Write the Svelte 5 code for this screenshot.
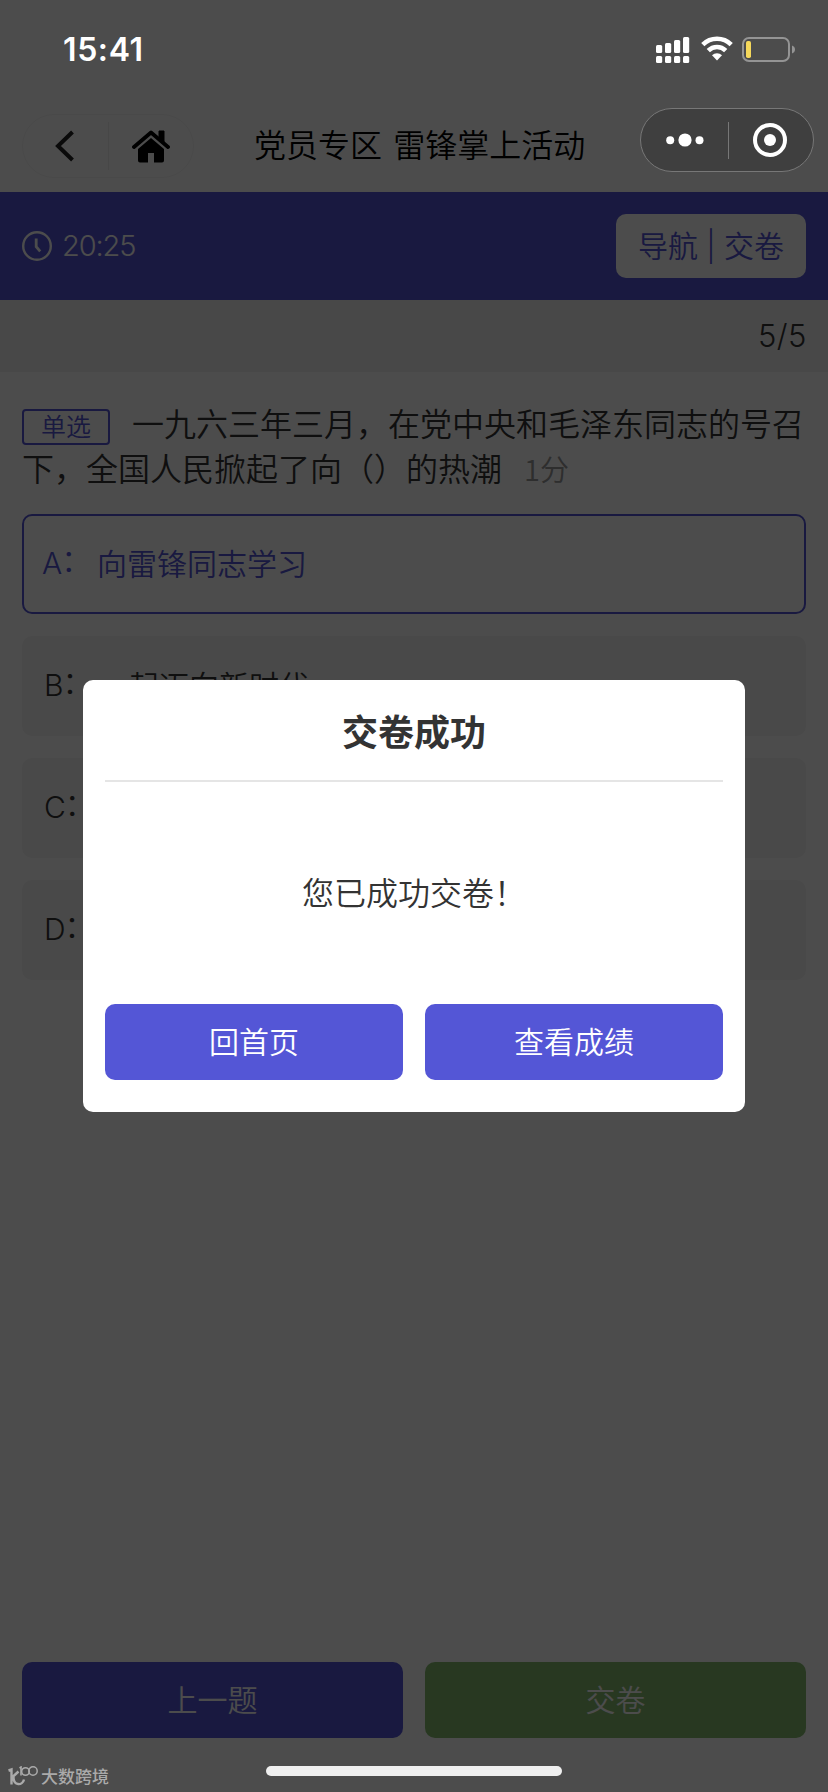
<script>
  let timeLeft = '20:25';
  let current = 5;
  let total = 5;
  let selected = 'A';
  let showModal = true;

  const options = [
    { key: 'A', text: '向雷锋同志学习' },
    { key: 'B', text: '一起迈向新时代' },
    { key: 'C', text: '' },
    { key: 'D', text: '' }
  ];

  // signal bar heights, left to right
  const bars = [8, 10, 13, 16];
</script>

<div class="screen">
  <div class="page">
    <header class="nav">
      <div class="nav-pill">
        <button class="nav-btn" aria-label="返回">
          <svg width="20" height="34" viewBox="0 0 20 34">
            <path d="M17.5 3 3 17l14.5 14" fill="none" stroke="#222" stroke-width="4" />
          </svg>
        </button>
        <span class="nav-line"></span>
        <button class="nav-btn" aria-label="首页">
          <svg width="38" height="33" viewBox="0 0 38 33">
            <path d="M2 17 19 2.5l17 14.5" fill="none" stroke="#000" stroke-width="3.8" stroke-linecap="round" stroke-linejoin="round" />
            <path d="M27 1h5v11l-5-4z" fill="#000" stroke="#000" stroke-linejoin="round" />
            <path d="M6 19 19 8l13 11V30.5q0 2-2 2h-8v-9.5h-6v9.5H8q-2 0-2-2z" fill="#000" />
          </svg>
        </button>
      </div>
      <h1>党员专区 雷锋掌上活动</h1>
    </header>

    <div class="timer-bar">
      <div class="timer">
        <svg width="30" height="30" viewBox="0 0 30 30" fill="none" stroke="#fff" stroke-width="2.4">
          <circle cx="15" cy="15" r="13.8" />
          <path d="M14.2 7.5v8.2l4 4.6" stroke-width="2.8" />
        </svg>
        <span>{timeLeft}</span>
      </div>
      <button class="jump">导航<i>|</i>交卷</button>
    </div>

    <div class="progress">{current}/{total}</div>

    <main>
      <p class="question"><span class="tag">单选</span>一九六三年三月，在党中央和毛泽东同志的号召下，全国人民掀起了向（）的热潮<span class="score">1分</span></p>
      <ul>
        {#each options as { key, text }}
          <li class:active={key === selected}>
            <span class="key">{key}<i>：</i></span>
            <span>{text}</span>
          </li>
        {/each}
      </ul>
    </main>

    <footer>
      <button class="btn">上一题</button>
      <button class="btn green">交卷</button>
    </footer>
  </div>

  <!-- The Modal -->
  {#if showModal}
    <div class="mask">
      <div class="modal">
        <h2>交卷成功</h2>
        <p>您已成功交卷！</p>
        <div class="actions">
          <button class="btn">回首页</button>
          <button class="btn">查看成绩</button>
        </div>
      </div>
    </div>
  {/if}

  <!-- System chrome stays above the mask -->
  <div class="system">
    <div class="status">
      <span class="clock">15:41</span>
      <div class="status-icons">
        <svg width="34" height="27" viewBox="0 0 34 27" fill="#fff">
          {#each bars as h, i}
            <rect x={i * 9} y={17 - h} width="6.2" height={h} rx="1.5" />
            <rect x={i * 9} y="20" width="6.2" height="7" rx="1.5" />
          {/each}
        </svg>
        <svg class="wifi" width="32" height="25" viewBox="0 0 32 25" fill="none" stroke="#fff" stroke-width="4.6">
          <path d="M1.8 8.6a20.3 20.3 0 0 1 28.4 0" />
          <path d="M7.3 14.6a12.4 12.4 0 0 1 17.4 0" />
          <path d="M16 24.5l-5-5.2a7.2 7.2 0 0 1 10 0z" fill="#fff" stroke="none" />
        </svg>
        <svg class="battery" width="54" height="25" viewBox="0 0 54 25">
          <rect x="1" y="1" width="46" height="23" rx="6" fill="none" stroke="#949494" stroke-width="2" />
          <rect x="4" y="4" width="5" height="17" rx="1.8" fill="#f5d85b" />
          <path d="M50 8.5c4 1.2 4 6.8 0 8z" fill="#949494" />
        </svg>
      </div>
    </div>
    <div class="capsule">
      <svg width="38" height="14" viewBox="0 0 38 14" fill="#fff">
        <circle cx="4.2" cy="7.3" r="4" />
        <circle cx="19" cy="7" r="6.6" />
        <circle cx="33.5" cy="7.3" r="4" />
      </svg>
      <span class="capsule-line"></span>
      <svg width="34" height="34" viewBox="0 0 34 34">
        <circle cx="17" cy="17" r="15" fill="none" stroke="#fff" stroke-width="4" />
        <circle cx="17" cy="17" r="6" fill="#fff" />
      </svg>
    </div>
    <div class="bottom">
      <div class="watermark">
        <svg width="31" height="21" viewBox="0 0 31 21" fill="none" stroke="#aaa">
          <path d="M.5 4.5 3.5 3.5v15M10.5 5.5 4 11.5M5.5 11c0 9 9 9 10.5 2.5" stroke-width="2.4" />
          <path d="M11.5 2 13 1v8.5" stroke-width="1.6" />
          <circle cx="17.5" cy="5.5" r="3.8" stroke-width="1.5" />
          <circle cx="25" cy="5" r="4.2" stroke-width="1.5" />
        </svg>
        <span>大数跨境</span>
      </div>
      <div class="home-bar"></div>
    </div>
  </div>
</div>

<style>
  :global(body) {
    margin: 0;
  }

  .screen {
    position: relative;
    width: 828px;
    height: 1792px;
    overflow: hidden;
    background: #fff;
    color: #333;
    font-family: Inter, "Noto Sans CJK SC", sans-serif;
    font-size: 30px;
    font-weight: 350;
  }

  .page {
    display: flex;
    flex-direction: column;
    height: 100%;
  }

  h1, h2, p, ul {
    margin: 0;
    padding: 0;
  }

  i {
    font-style: normal;
  }

  button {
    font: inherit;
    border: 0;
    padding: 0;
    background: none;
  }

  .nav {
    box-sizing: border-box;
    height: 192px;
    padding: 114px 0 0 22px;
    display: flex;
    align-items: flex-start;
  }

  .nav-pill {
    box-sizing: border-box;
    width: 172px;
    height: 64px;
    display: flex;
    align-items: center;
    border: 1px solid #f5f5f5;
    border-radius: 32px;
  }

  .nav-btn {
    flex: 1;
    display: flex;
    align-items: center;
    justify-content: center;
  }

  .nav-line {
    width: 1px;
    height: 48px;
    background: #efefef;
  }

  h1 {
    margin-left: 60px;
    line-height: 59px;
    font-size: 32px;
    font-weight: 350;
    color: #000;
    white-space: nowrap;
    word-spacing: 4px;
    font-family: "Noto Sans CJK SC", sans-serif;
  }

  .timer-bar {
    height: 108px;
    padding: 0 22px;
    display: flex;
    align-items: center;
    justify-content: space-between;
    background: #5456d6;
    color: #fff;
  }

  .timer {
    display: flex;
    align-items: center;
    gap: 10px;
    font-size: 29px;
    line-height: 30px;
    letter-spacing: -1.1px;
  }

  .timer span {
    margin-top: -1px;
  }

  .jump {
    width: 190px;
    height: 64px;
    border-radius: 10px;
    background: #fff;
    color: #5456d6;
    line-height: 62px;
    white-space: nowrap;
  }

  .jump i {
    display: inline-block;
    width: 26px;
    text-align: center;
  }

  .progress {
    height: 72px;
    padding: 0 21px;
    line-height: 71px;
    font-size: 31px;
    letter-spacing: 0.5px;
    text-align: right;
    background: #f2f2f2;
  }

  main {
    flex: 1;
    padding: 28px 22px 0;
  }

  .question {
    height: 88px;
    font-size: 32px;
    line-height: 44px;
    font-family: "Noto Sans CJK SC", sans-serif;
  }

  .tag {
    display: inline-block;
    box-sizing: border-box;
    width: 88px;
    height: 36px;
    margin-right: 22px;
    border: 2px solid #5456d6;
    border-radius: 4px;
    color: #5456d6;
    font-size: 25px;
    line-height: 28px;
    text-align: center;
    vertical-align: 0;
  }

  .score {
    margin-left: 22px;
    font-size: 29px;
    color: #999;
  }

  ul {
    list-style: none;
    margin-top: 26px;
    display: grid;
    gap: 22px;
  }

  li {
    box-sizing: border-box;
    height: 100px;
    padding: 0 22px 5px;
    display: flex;
    align-items: center;
    background: #f5f5f5;
    border-radius: 10px;
  }

  li.active {
    padding: 0 18px 5px;
    border: 2px solid #5456d6;
    background: #fff;
    color: #5456d6;
  }

  .key {
    width: 55px;
    height: 43px;
    line-height: 46px;
    white-space: nowrap;
  }

  .key i {
    margin-left: -1px;
    line-height: 1;
    vertical-align: 3px;
  }

  footer {
    height: 130px;
    padding: 0 22px;
    display: flex;
    gap: 22px;
  }

  .btn {
    flex: 1;
    height: 76px;
    border-radius: 10px;
    background: #5456d6;
    color: #fff;
    line-height: 74px;
  }

  .green {
    background: #85bb71;
  }

  .mask {
    position: absolute;
    inset: 0;
    display: flex;
    align-items: center;
    justify-content: center;
    background: rgba(0, 0, 0, 0.7);
  }

  .modal {
    box-sizing: border-box;
    width: 662px;
    height: 432px;
    padding: 0 22px 32px;
    display: flex;
    flex-direction: column;
    background: #fff;
    border-radius: 10px;
    text-align: center;
  }

  h2 {
    height: 100px;
    line-height: 106px;
    font-size: 36px;
    font-weight: 700;
    border-bottom: 2px solid #e5e5e5;
  }

  .modal p {
    height: 222px;
    font-size: 32px;
    line-height: 224px;
  }

  .actions {
    display: flex;
    gap: 22px;
  }

  .system {
    position: absolute;
    inset: 0;
    display: flex;
    flex-direction: column;
    color: #fff;
  }

  .status {
    box-sizing: border-box;
    height: 108px;
    padding: 30px 32px 0 63px;
    display: flex;
    align-items: flex-start;
    justify-content: space-between;
  }

  .clock {
    font-size: 32px;
    font-weight: 600;
    line-height: 40px;
    letter-spacing: 0.6px;
  }

  .status-icons {
    display: flex;
    align-items: center;
    padding-top: 6px;
  }

  .wifi {
    margin-left: 11px;
    margin-bottom: 2px;
  }

  .battery {
    margin-left: 9px;
    margin-bottom: 1px;
  }

  .capsule {
    box-sizing: border-box;
    align-self: flex-end;
    width: 174px;
    height: 64px;
    margin-right: 14px;
    padding: 0 26px 0 25px;
    display: flex;
    align-items: center;
    justify-content: space-between;
    background: #3f3f3f;
    border: 1px solid #777;
    border-radius: 32px;
  }

  .capsule-line {
    width: 1px;
    height: 37px;
    background: #777;
  }

  .bottom {
    margin-top: auto;
    height: 28px;
    display: flex;
    align-items: flex-start;
  }

  .watermark {
    width: 258px;
    padding: 2px 0 0 8px;
    display: flex;
    align-items: flex-start;
    gap: 2px;
    color: #aaa;
    font-size: 17px;
    font-weight: 500;
    line-height: 22px;
  }

  .home-bar {
    width: 296px;
    height: 10px;
    margin-top: 2px;
    border-radius: 5px;
    background: #efefef;
  }
</style>
